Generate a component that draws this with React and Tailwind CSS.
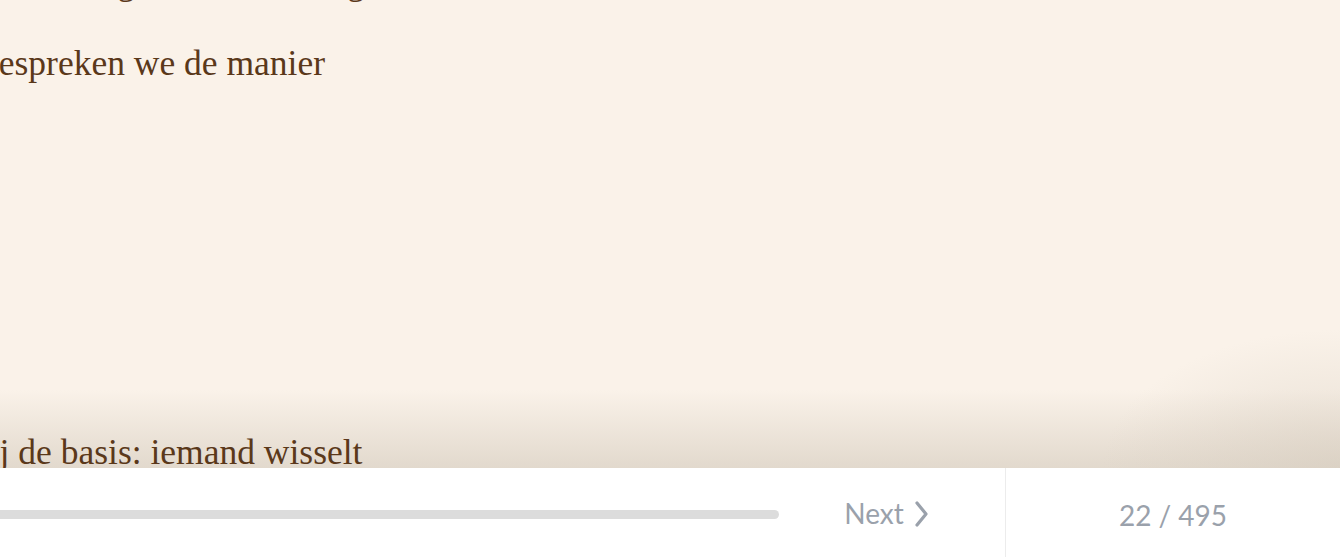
import React from "react";

function ChevronRight() {
  return (
    <svg width="18" height="28" viewBox="0 0 18 28" fill="none" className="ml-[8px] mt-[2px]">
      <polyline
        points="5,3 14,14 5,25"
        stroke="#9aa1ab"
        strokeWidth="3.2"
        strokeLinecap="round"
        strokeLinejoin="round"
      />
    </svg>
  );
}

export default function App() {
  return (
    <div className="flex flex-col w-full h-[557px] overflow-hidden bg-white">
      {/* Page text */}
      <main className="relative h-[468px] overflow-hidden bg-[#faf2e9]">
        {/* Bottom fade, under the text */}
        <div className="absolute inset-x-0 bottom-0 h-[78px] bg-gradient-to-b from-[#faf2e9]/0 to-[#e2d9cd]" />
        <div className="absolute right-0 bottom-0 w-[240px] h-[140px] bg-[radial-gradient(ellipse_at_bottom_right,rgba(212,202,188,0.5),rgba(250,242,233,0)_70%)]" />

        <div
          className="relative ml-[-19px] text-[35.5px] leading-[54px] text-[#5a381a] whitespace-nowrap"
          style={{ fontFamily: '"Liberation Serif", "Times New Roman", serif' }}
        >
          <p className="mt-[-45px] ml-[12px]">over het gebruik van het geld dat we</p>
          <p className="mt-[27px]">bespreken we de manier</p>
          <p className="mt-[335px] ml-[-9px]">bij de basis: iemand wisselt</p>
        </div>
      </main>

      {/* Footer bar */}
      <footer
        className="flex h-[89px] items-center bg-white text-[#9aa1ab]"
        style={{ fontFamily: 'Lato, "Open Sans", sans-serif' }}
      >
        <div className="w-[779px] h-[9px] mt-[3px] rounded-r-full bg-[#dcdcdc]" />
        <div className="flex flex-1 items-center justify-center pr-[10px]">
          <span className="text-[28px] leading-none">Next</span>
          <ChevronRight />
        </div>
        <div className="flex w-[335px] h-full items-center justify-center border-l border-[#ececec]">
          <span className="text-[28px] leading-none mt-[4px]">22 / 495</span>
        </div>
      </footer>
    </div>
  );
}
